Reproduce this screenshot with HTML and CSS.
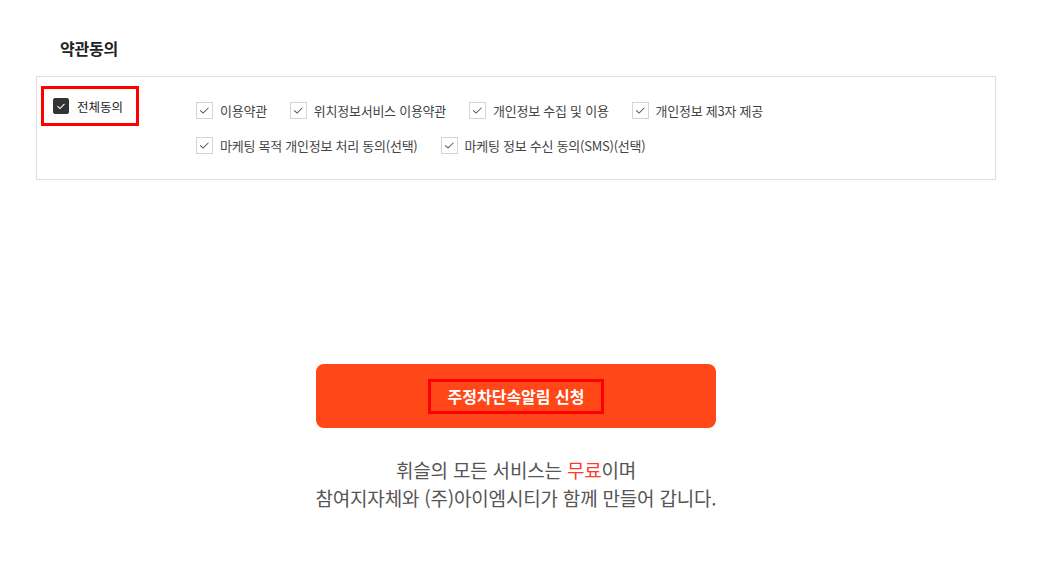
FILE: index.html
```html
<!DOCTYPE html>
<html lang="ko">
<head>
<meta charset="utf-8">
<link rel="stylesheet" href="styles.css">
</head>
<body>
<div class="page">
  <h2 class="title">약관동의</h2>
  <div class="terms">
    <div class="all-wrap">
      <label class="all">
        <span class="cb cb-dark"><svg viewBox="0 0 16 16" width="16" height="16"><path d="M4 8.2 L6.8 10.9 L12 5.6" fill="none" stroke="#fff" stroke-width="1.3"/></svg></span>
        <span>전체동의</span>
      </label>
    </div>
    <div class="opts">
      <div class="row">
        <label class="opt"><span class="cb"><svg viewBox="0 0 17 17" width="17" height="17"><path d="M3.6 8.3 L6.9 11.5 L13 5.4" fill="none" stroke="#555" stroke-width="1.15"/></svg></span>이용약관</label>
        <label class="opt"><span class="cb"><svg viewBox="0 0 17 17" width="17" height="17"><path d="M3.6 8.3 L6.9 11.5 L13 5.4" fill="none" stroke="#555" stroke-width="1.15"/></svg></span>위치정보서비스 이용약관</label>
        <label class="opt"><span class="cb"><svg viewBox="0 0 17 17" width="17" height="17"><path d="M3.6 8.3 L6.9 11.5 L13 5.4" fill="none" stroke="#555" stroke-width="1.15"/></svg></span>개인정보 수집 및 이용</label>
        <label class="opt"><span class="cb"><svg viewBox="0 0 17 17" width="17" height="17"><path d="M3.6 8.3 L6.9 11.5 L13 5.4" fill="none" stroke="#555" stroke-width="1.15"/></svg></span>개인정보 제3자 제공</label>
      </div>
      <div class="row">
        <label class="opt"><span class="cb"><svg viewBox="0 0 17 17" width="17" height="17"><path d="M3.6 8.3 L6.9 11.5 L13 5.4" fill="none" stroke="#555" stroke-width="1.15"/></svg></span>마케팅 목적 개인정보 처리 동의(선택)</label>
        <label class="opt"><span class="cb"><svg viewBox="0 0 17 17" width="17" height="17"><path d="M3.6 8.3 L6.9 11.5 L13 5.4" fill="none" stroke="#555" stroke-width="1.15"/></svg></span>마케팅 정보 수신 동의(SMS)(선택)</label>
      </div>
    </div>
  </div>
  <div class="cta">
    <button class="btn"><span class="btn-label">주정차단속알림 신청</span></button>
    <p class="note">휘슬의 모든 서비스는 <em>무료</em>이며<br>참여지자체와 (주)아이엠시티가 함께 만들어 갑니다.</p>
  </div>
</div>
</body>
</html>
```

FILE: styles.css
```css
* { box-sizing: border-box; }
html, body { margin: 0; padding: 0; background: #fff; }
body { font-family: "Noto Sans CJK KR", "Noto Sans", sans-serif; color: #333; }
.page { width: 1051px; padding: 36px 55px 0 36px; }
.title { margin: 0 0 0 24px; font-size: 16px; font-weight: 700; color: #222; line-height: 24px; height: 24px; letter-spacing: -0.2px; }
.terms { margin-top: 16px; width: 960px; height: 104px; border: 1px solid #ddd; display: flex; padding: 9px 0 0 4px; }
.all-wrap { width: 98px; height: 40px; border: 3px solid #f00; display: flex; align-items: center; padding-left: 9px; }
.all { display: flex; align-items: center; gap: 8px; font-size: 12.5px; color: #222; }
.cb { width: 17px; height: 17px; border: 1px solid #d4d4d4; background: #fff; display: inline-flex; align-items: center; justify-content: center; flex: none; }
.cb svg { display: block; }
.cb-dark { width: 16px; height: 16px; background: #333; border-color: #333; border-radius: 2px; }
.opts { margin-left: 57px; padding-top: 16px; display: flex; flex-direction: column; gap: 18px; }
.row { display: flex; gap: 23px; }
.opt { display: flex; align-items: center; gap: 7px; font-size: 13px; color: #444; line-height: 17px; letter-spacing: -0.25px; }
.cta { display: flex; flex-direction: column; align-items: center; padding-top: 184px; margin-left: -36px; width: 1051px; padding-right: 19px; }
.btn { width: 400px; height: 64px; border: none; border-radius: 8px; background: #ff4717; display: flex; align-items: center; justify-content: center; font-family: inherit; cursor: pointer; padding: 0; }
.btn-label { border: 3px solid #f00; color: #fff; font-size: 16px; font-weight: 700; padding: 0 17px; height: 35px; line-height: 29px; }
.note { margin: 28px 0 0; text-align: center; font-size: 19px; line-height: 28px; color: #555; letter-spacing: -0.2px; }
.note em { font-style: normal; color: #ff3b2f; }
```
